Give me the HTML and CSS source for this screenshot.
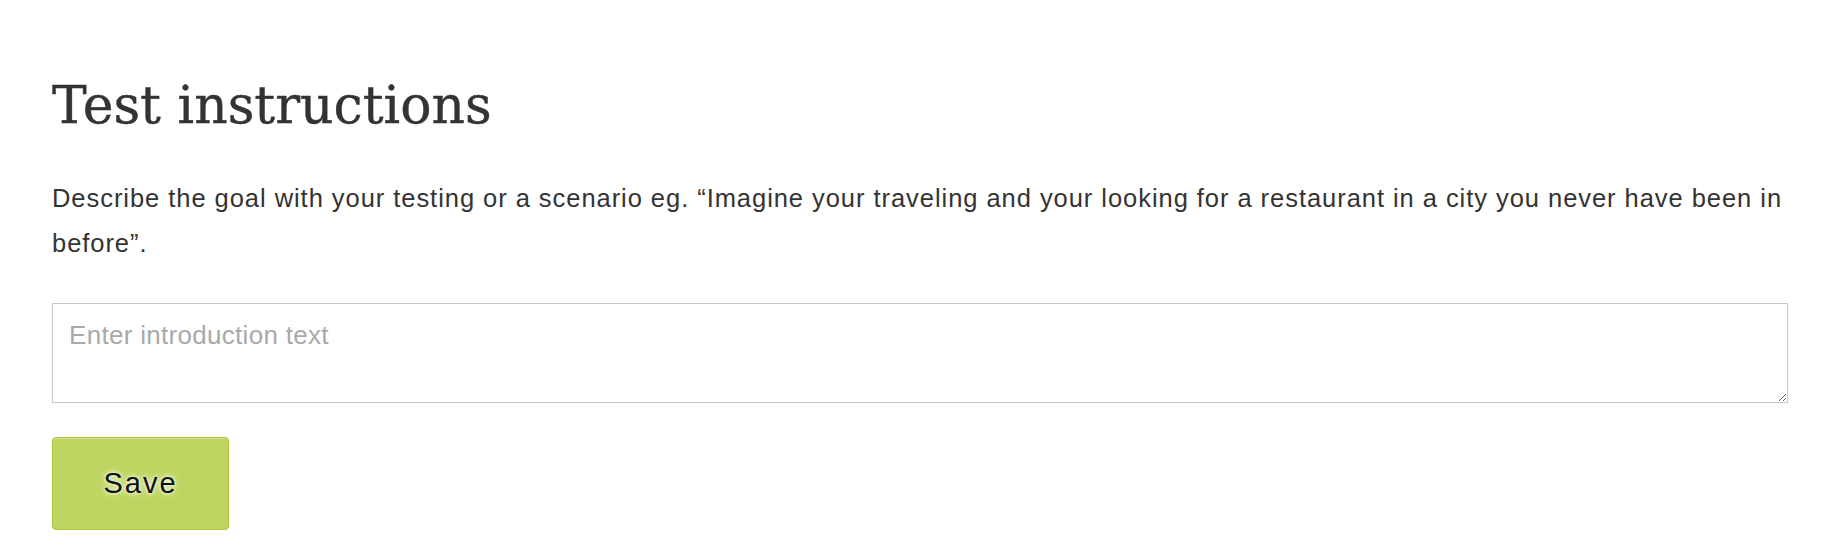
FILE: index.html
```html
<!DOCTYPE html>
<html>
<head>
<meta charset="utf-8">
<link rel="stylesheet" href="styles.css">
</head>
<body>
<main class="page">
  <h1 class="title">Test instructions</h1>
  <p class="lead">Describe the goal with your testing or a scenario eg. “Imagine your traveling and your looking for a restaurant in a city you never have been in before”.</p>
  <textarea class="intro" placeholder="Enter introduction text"></textarea>
  <div class="actions">
    <button class="save" type="button">Save</button>
  </div>
</main>
</body>
</html>
```

FILE: styles.css
```css
html, body {
  margin: 0;
  padding: 0;
  background: #ffffff;
}

.page {
  display: flex;
  flex-direction: column;
  padding: 73px 46px 0 52px;
}

.title {
  margin: 0;
  font-family: "DejaVu Serif", "Liberation Serif", serif;
  font-weight: normal;
  font-size: 52px;
  line-height: 64px;
  color: #333333;
  -webkit-text-stroke: 0.4px #333333;
}

.lead {
  margin: 39px 0 0 0;
  font-family: "Liberation Sans", Arial, sans-serif;
  font-size: 25.5px;
  letter-spacing: 0.95px;
  line-height: 45px;
  color: #333333;
}

.intro {
  display: block;
  box-sizing: border-box;
  margin: 37px 0 0 0;
  width: 100%;
  height: 100px;
  padding: 16px 16px;
  border: 1px solid #c8c8c8;
  border-radius: 0;
  font-family: "Liberation Sans", Arial, sans-serif;
  font-size: 26px;
  letter-spacing: 0.3px;
  line-height: 30px;
  color: #333333;
  outline: none;
}

.intro::placeholder {
  color: #a9a9a9;
}

.actions {
  display: flex;
  margin-top: 34px;
}

.save {
  box-sizing: border-box;
  width: 177px;
  height: 93px;
  border: 1px solid #a8c83c;
  border-radius: 4px;
  background: #bed661;
  box-shadow: inset 0 1px 0 #d3e48e;
  font-family: "Liberation Sans", Arial, sans-serif;
  font-size: 29px;
  letter-spacing: 2px;
  color: #111111;
  text-shadow: 0 0 6px #ffffff, 0 0 3px #ffffff;
  padding: 0;
  cursor: pointer;
}
```
